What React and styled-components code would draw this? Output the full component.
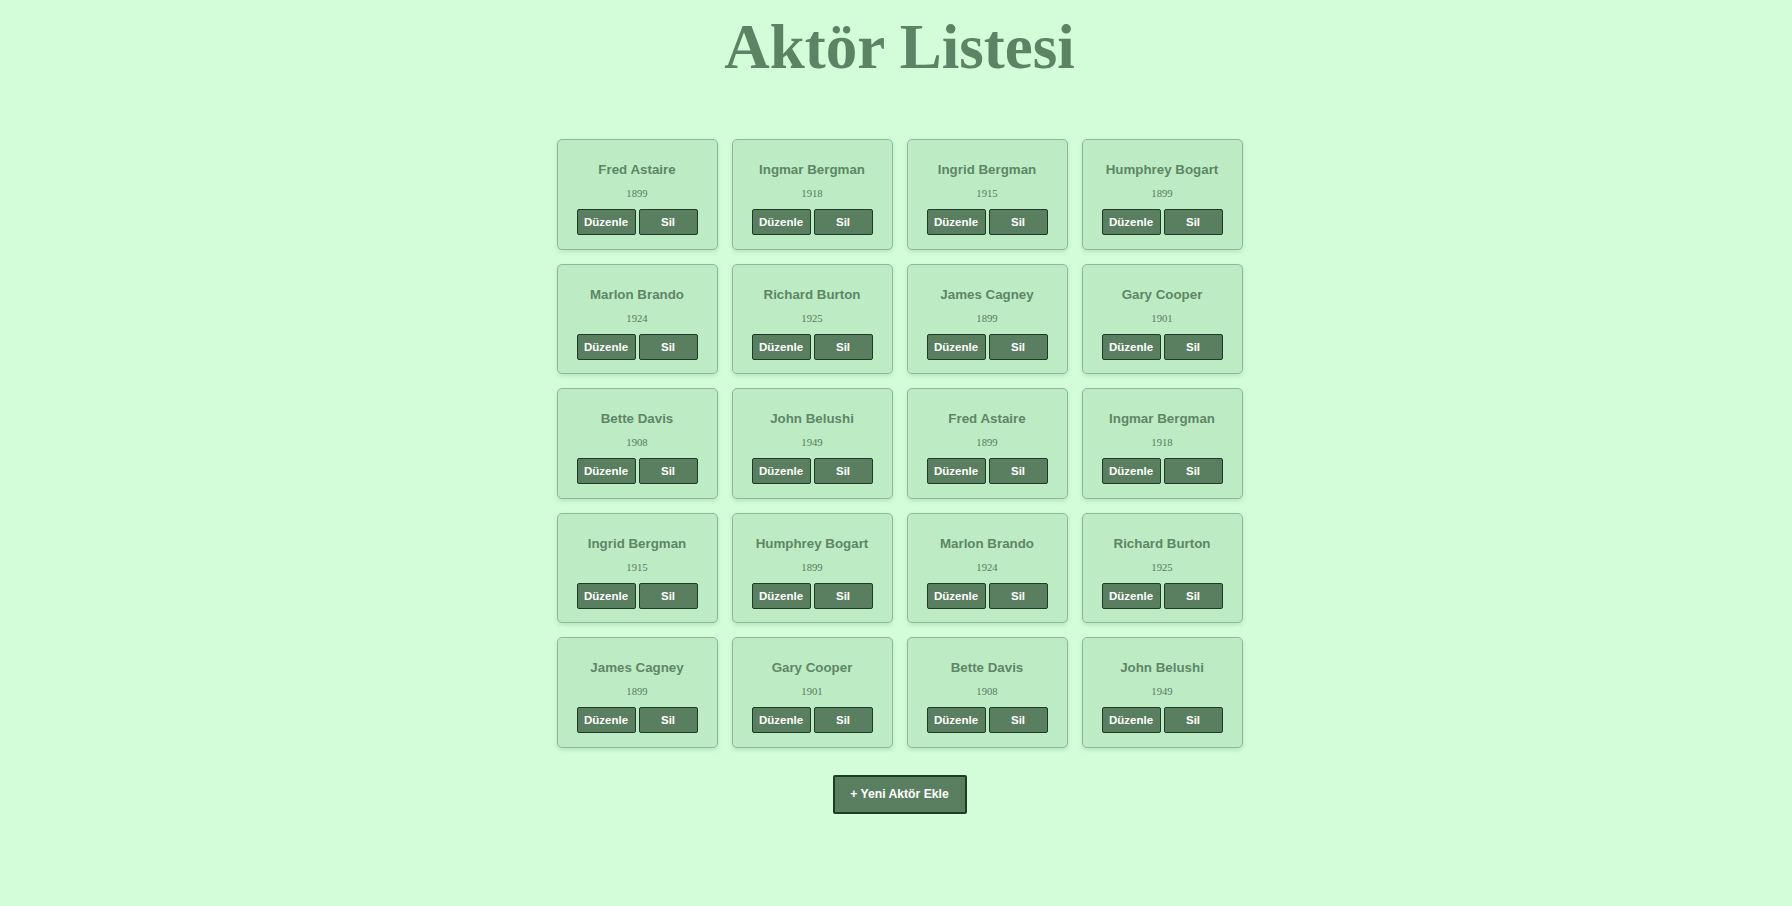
import React from "react";
import styled, { createGlobalStyle } from "styled-components";

const actors = [
  { name: "Fred Astaire", year: 1899 },
  { name: "Ingmar Bergman", year: 1918 },
  { name: "Ingrid Bergman", year: 1915 },
  { name: "Humphrey Bogart", year: 1899 },
  { name: "Marlon Brando", year: 1924 },
  { name: "Richard Burton", year: 1925 },
  { name: "James Cagney", year: 1899 },
  { name: "Gary Cooper", year: 1901 },
  { name: "Bette Davis", year: 1908 },
  { name: "John Belushi", year: 1949 },
  { name: "Fred Astaire", year: 1899 },
  { name: "Ingmar Bergman", year: 1918 },
  { name: "Ingrid Bergman", year: 1915 },
  { name: "Humphrey Bogart", year: 1899 },
  { name: "Marlon Brando", year: 1924 },
  { name: "Richard Burton", year: 1925 },
  { name: "James Cagney", year: 1899 },
  { name: "Gary Cooper", year: 1901 },
  { name: "Bette Davis", year: 1908 },
  { name: "John Belushi", year: 1949 },
];

const App = () => {
  return (
    <>
      <GlobalStyle />
      <Page>
        <Title>Aktör Listesi</Title>
        <Grid>
          {actors.map((actor, i) => (
            <Card key={i}>
              <Name>{actor.name}</Name>
              <Year>{actor.year}</Year>
              <Actions>
                <SmallButton>Düzenle</SmallButton>
                <SmallButton>Sil</SmallButton>
              </Actions>
            </Card>
          ))}
        </Grid>
        <AddButton>+ Yeni Aktör Ekle</AddButton>
      </Page>
    </>
  );
};

const GlobalStyle = createGlobalStyle`
  html, body {
    margin: 0;
    padding: 0;
    background: #d3fdd9;
  }
  * {
    box-sizing: border-box;
  }
`;
const Page = styled.div`
  min-height: 906px;
  display: flex;
  flex-direction: column;
  align-items: center;
  padding: 11px 0 40px 7px;
  background: #d3fdd9;
  font-family: "Liberation Serif", "Times New Roman", serif;
`;
const Title = styled.h1`
  margin: 0;
  font-size: 63px;
  line-height: 73px;
  font-weight: bold;
  color: #5b8464;
`;
const Grid = styled.div`
  display: grid;
  grid-template-columns: repeat(4, 161px);
  gap: 14px;
  margin-top: 55px;
`;
const Card = styled.div`
  display: flex;
  flex-direction: column;
  align-items: center;
  height: 110.6px;
  padding: 22px 0 0;
  background: #bdecc4;
  border: 1px solid #8dba96;
  border-radius: 5px;
  box-shadow: 0 2px 4px rgba(60, 110, 70, 0.18);
`;
const Name = styled.div`
  font-family: "Liberation Sans", Arial, sans-serif;
  font-size: 13.33px;
  font-weight: bold;
  line-height: 16px;
  color: #5e8666;
`;
const Year = styled.div`
  margin-top: 9px;
  font-size: 10.67px;
  line-height: 12px;
  color: #577a5e;
`;
const Actions = styled.div`
  display: flex;
  gap: 3px;
  margin-top: 10px;
`;
const SmallButton = styled.button`
  width: 59px;
  height: 26px;
  padding: 0;
  background: #5a7f60;
  color: #fff;
  border: 1px solid #1e3b25;
  border-radius: 2px;
  font-family: "Liberation Sans", Arial, sans-serif;
  font-size: 11.5px;
  font-weight: bold;
  cursor: pointer;
`;
const AddButton = styled.button`
  margin-top: 27px;
  width: 134px;
  height: 39px;
  padding: 0;
  background: #5a7f60;
  color: #fff;
  border: 2px solid #1e3b25;
  border-radius: 2px;
  font-family: "Liberation Sans", Arial, sans-serif;
  font-size: 12.2px;
  font-weight: bold;
  cursor: pointer;
`;

export default App;
